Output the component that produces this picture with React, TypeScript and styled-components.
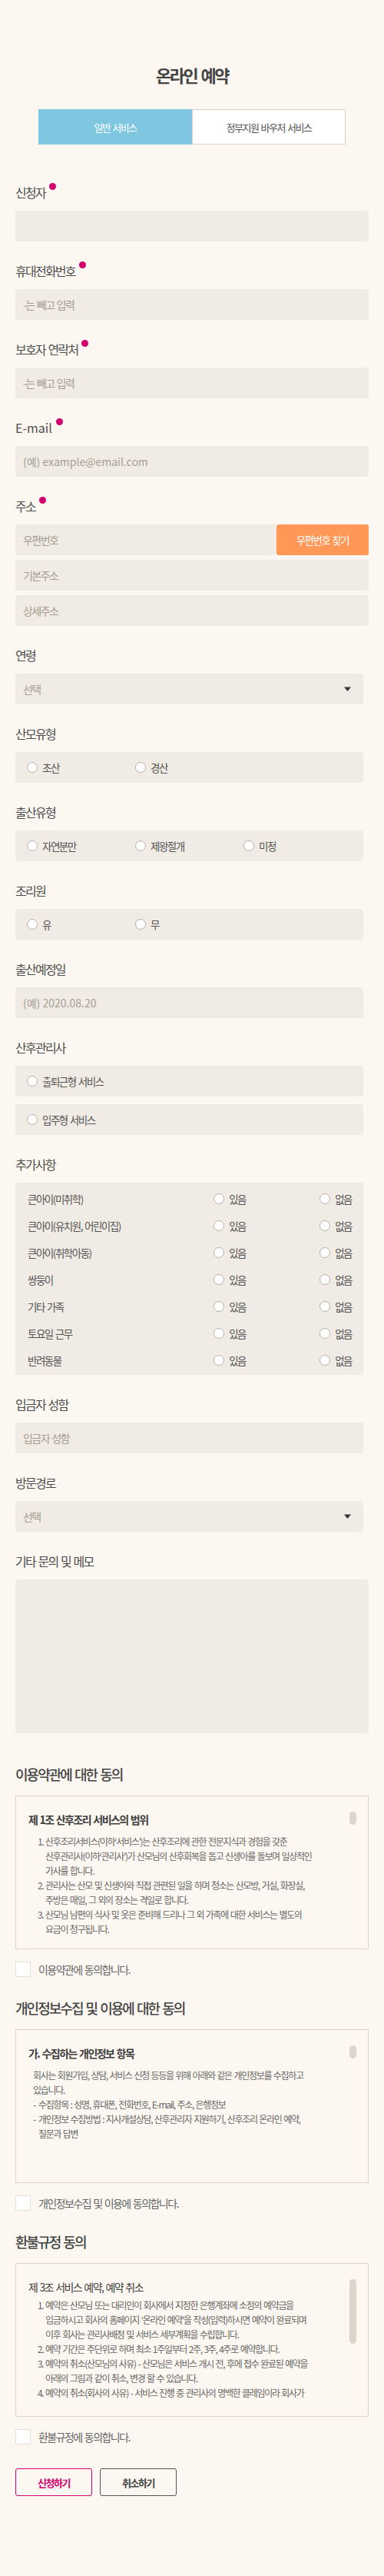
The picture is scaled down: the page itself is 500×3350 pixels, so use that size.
import React from "react";
import styled, { createGlobalStyle } from "styled-components";

const GlobalStyle = createGlobalStyle`
  html, body { margin: 0; padding: 0; background: #fcf8f1; }
  body { font-family: "Noto Sans CJK KR", "Noto Sans", sans-serif; color: #555; }
  *, *::before, *::after { box-sizing: border-box; letter-spacing: -0.11em; word-spacing: 0.11em; }
`;

const Page = styled.div`
  width: 500px;
  min-height: 3350px;
  padding: 81px 20px 100px;
  background: #fcf8f1;
  display: flex;
  flex-direction: column;
`;

const Title = styled.h1`
  margin: 0;
  font-size: 22px;
  line-height: 32px;
  font-weight: 700;
  color: #444;
  text-align: center;
`;

const Tabs = styled.div`
  display: flex;
  flex-shrink: 0;
  width: 400px;
  height: 46px;
  margin: 29px auto 0;
`;

const Tab = styled.button<{ $active?: boolean }>`
  flex: 1;
  padding: 0;
  border: 1px solid ${(p) => (p.$active ? "#7fc6e1" : "#dcd3c6")};
  background: ${(p) => (p.$active ? "#7fc6e1" : "#fff")};
  color: ${(p) => (p.$active ? "#fff" : "#555")};
  font-family: inherit;
  font-size: 13px;
  cursor: pointer;
`;

const Form = styled.form`
  display: flex;
  flex-direction: column;
  flex-shrink: 0;
  margin-top: 24px;
`;

const Field = styled.div`
  display: flex;
  flex-direction: column;
  flex-shrink: 0;
  margin-top: 28px;
`;

const Label = styled.div`
  display: flex;
  align-items: flex-start;
  height: 20px;
  margin-bottom: 14px;
`;

const LabelText = styled.span<{ $latin?: boolean }>`
  font-size: 16px;
  line-height: 20px;
  color: #4d4d4d;
  ${(p) => (p.$latin ? "letter-spacing: 0; word-spacing: 0;" : "")}
`;

const Required = styled.span`
  width: 9px;
  height: 9px;
  margin: -2px 0 0 5px;
  border-radius: 50%;
  background: #d2006c;
  flex-shrink: 0;
`;

const Input = styled.input<{ $narrow?: boolean; $latin?: boolean }>`
  width: ${(p) => (p.$narrow ? "calc(100% - 7px)" : "100%")};
  height: 40px;
  flex-shrink: 0;
  border: 0;
  border-radius: 3px;
  background: #f0ebe4;
  padding: 0 10px;
  font-family: inherit;
  font-size: 14px;
  color: #555;
  outline: none;
  ${(p) => (p.$latin ? "letter-spacing: 0; word-spacing: 0;" : "")}
  &::placeholder {
    color: #a59d93;
  }
`;

const ZipInput = styled(Input)`
  flex: 1;
  width: auto;
  min-width: 0;
  border-radius: 3px 0 0 3px;
`;

const AddressStack = styled.div`
  display: flex;
  flex-direction: column;
  gap: 6px;
`;

const ZipRow = styled.div`
  display: flex;
`;

const ZipButton = styled.button`
  width: 120px;
  height: 40px;
  flex-shrink: 0;
  border: 0;
  border-radius: 3px;
  background: #ff9757;
  color: #fff;
  font-family: inherit;
  font-size: 13.5px;
  cursor: pointer;
`;

const SelectBox = styled.div`
  display: flex;
  align-items: center;
  width: calc(100% - 7px);
  height: 40px;
  padding: 0 16px 0 10px;
  border-radius: 3px;
  background: #f0ebe4;
`;

const Select = styled.select`
  flex: 1;
  appearance: none;
  border: 0;
  padding: 0;
  background: transparent;
  font-family: inherit;
  font-size: 14px;
  color: #a59d93;
  outline: none;
`;

const ChoiceBox = styled.div`
  display: flex;
  align-items: center;
  width: calc(100% - 7px);
  height: 40px;
  padding: 0 15px;
  border-radius: 3px;
  background: #f0ebe4;
`;

const ChoiceStack = styled.div`
  display: flex;
  flex-direction: column;
  gap: 10px;
`;

const Choice = styled.label<{ $w?: number }>`
  display: flex;
  align-items: center;
  gap: 6px;
  width: ${(p) => (p.$w ? `${p.$w}px` : "auto")};
  font-size: 13.5px;
  color: #555;
`;

const Radio = styled.input`
  appearance: none;
  width: 14px;
  height: 14px;
  margin: 0;
  flex-shrink: 0;
  border: 1px solid #b7b1a9;
  border-radius: 50%;
  background: #fff;
`;

const ExtraBox = styled.div`
  width: calc(100% - 7px);
  padding: 3px 15px 2px 16px;
  border-radius: 3px;
  background: #f0ebe4;
`;

const ExtraRow = styled.div`
  display: grid;
  grid-template-columns: 1fr 138px auto;
  align-items: center;
  height: 35px;
`;

const ExtraName = styled.span`
  font-size: 13.5px;
  color: #555;
`;

const Memo = styled.textarea`
  display: block;
  width: 100%;
  height: 200px;
  flex-shrink: 0;
  border: 0;
  border-radius: 3px;
  background: #f0ebe4;
  resize: none;
  font-family: inherit;
  outline: none;
`;

const Agreement = styled.section<{ $first?: boolean }>`
  display: flex;
  flex-direction: column;
  flex-shrink: 0;
  margin-top: ${(p) => (p.$first ? "40px" : "27px")};
`;

const SectionTitle = styled.h2`
  margin: 0 0 15px;
  font-size: 18px;
  line-height: 26px;
  font-weight: 500;
  color: #444;
`;

const TermsBox = styled.div`
  display: flex;
  flex-shrink: 0;
  gap: 8px;
  height: 200px;
  padding: 20px 15px 17px 16px;
  border: 1px solid #ddd4c7;
`;

const TermsBody = styled.div`
  flex: 1;
  min-width: 0;
  overflow: hidden;
  font-size: 12px;
  line-height: 19px;
  color: #666;
  white-space: nowrap;
`;

const Track = styled.div`
  width: 9px;
  flex-shrink: 0;
`;

const Thumb = styled.div<{ $h: number }>`
  height: ${(p) => p.$h}px;
  border-radius: 5px;
  background: #dcd5cb;
`;

const TermsHeading = styled.h3<{ $plain?: boolean }>`
  margin: 0 0 ${(p) => (p.$plain ? "4px" : "9px")};
  font-size: 14px;
  line-height: 20px;
  font-weight: ${(p) => (p.$plain ? 400 : 700)};
  color: #3f3f3f;
`;

const TermsList = styled.ol`
  margin: 0;
  padding: 0 0 0 22px;
`;

const TermsPara = styled.div`
  padding-left: 6px;
`;

const DashLine = styled.div`
  display: flex;
`;

const Dash = styled.span`
  width: 7px;
  flex-shrink: 0;
`;

const Agree = styled.label`
  display: flex;
  align-items: center;
  gap: 10px;
  margin-top: 16px;
  font-size: 14px;
  color: #666;
`;

const CheckBox = styled.input`
  appearance: none;
  width: 20px;
  height: 20px;
  margin: 0;
  flex-shrink: 0;
  border: 1px solid #e3ded6;
  background: #fff;
`;

const Actions = styled.div`
  display: flex;
  flex-shrink: 0;
  gap: 10px;
  margin-top: 31px;
`;

const ActionButton = styled.button<{ $primary?: boolean }>`
  width: 100px;
  height: 36px;
  border-radius: 3px;
  border: 1px solid ${(p) => (p.$primary ? "#d3006e" : "#555")};
  background: transparent;
  color: ${(p) => (p.$primary ? "#d3006e" : "#444")};
  font-family: inherit;
  font-size: 13px;
  font-weight: 700;
  cursor: pointer;
`;

const Arrow = () => (
  <svg width="9" height="6" viewBox="0 0 9 6" aria-hidden="true">
    <path d="M0 0.5h9L4.5 6z" fill="#333" />
  </svg>
);

const FieldLabel = ({ text, required, latin }: { text: string; required?: boolean; latin?: boolean }) => (
  <Label>
    <LabelText $latin={latin}>{text}</LabelText>
    {required && <Required />}
  </Label>
);

const SelectField = ({ name }: { name: string }) => (
  <SelectBox>
    <Select name={name} defaultValue="">
      <option value="">선택</option>
    </Select>
    <Arrow />
  </SelectBox>
);

const RadioRow = ({ name, options }: { name: string; options: string[] }) => (
  <ChoiceBox>
    {options.map((o) => (
      <Choice key={o} $w={141}>
        <Radio type="radio" name={name} />
        {o}
      </Choice>
    ))}
  </ChoiceBox>
);

const contactFields = [
  { label: "신청자", placeholder: "" },
  { label: "휴대전화번호", placeholder: "-는 빼고 입력" },
  { label: "보호자 연락처", placeholder: "-는 빼고 입력" },
];

const extras = [
  "큰아이(미취학)",
  "큰아이(유치원, 어린이집)",
  "큰아이(취학아동)",
  "쌍둥이",
  "기타 가족",
  "토요일 근무",
  "반려동물",
];

export default function App() {
  return (
    <>
      <GlobalStyle />
      <Page>
        <Title>온라인 예약</Title>
        <Tabs>
          <Tab type="button" $active>
            일반 서비스
          </Tab>
          <Tab type="button">정부지원 바우처 서비스</Tab>
        </Tabs>

        <Form onSubmit={(e) => e.preventDefault()}>
          {contactFields.map((f) => (
            <Field key={f.label}>
              <FieldLabel text={f.label} required />
              <Input placeholder={f.placeholder} />
            </Field>
          ))}

          <Field>
            <FieldLabel text="E-mail" required latin />
            <Input $latin placeholder="(예) example@email.com" />
          </Field>

          <Field>
            <FieldLabel text="주소" required />
            <AddressStack>
              <ZipRow>
                <ZipInput placeholder="우편번호" />
                <ZipButton type="button">우편번호 찾기</ZipButton>
              </ZipRow>
              <Input placeholder="기본주소" />
              <Input placeholder="상세주소" />
            </AddressStack>
          </Field>

          <Field>
            <FieldLabel text="연령" />
            <SelectField name="age" />
          </Field>

          <Field>
            <FieldLabel text="산모유형" />
            <RadioRow name="mother" options={["초산", "경산"]} />
          </Field>

          <Field>
            <FieldLabel text="출산유형" />
            <RadioRow name="birth" options={["자연분만", "제왕절개", "미정"]} />
          </Field>

          <Field>
            <FieldLabel text="조리원" />
            <RadioRow name="center" options={["유", "무"]} />
          </Field>

          <Field>
            <FieldLabel text="출산예정일" />
            <Input $narrow $latin placeholder="(예) 2020.08.20" />
          </Field>

          <Field>
            <FieldLabel text="산후관리사" />
            <ChoiceStack>
              <ChoiceBox>
                <Choice>
                  <Radio type="radio" name="care" />
                  출퇴근형 서비스
                </Choice>
              </ChoiceBox>
              <ChoiceBox>
                <Choice>
                  <Radio type="radio" name="care" />
                  입주형 서비스
                </Choice>
              </ChoiceBox>
            </ChoiceStack>
          </Field>

          <Field>
            <FieldLabel text="추가사항" />
            <ExtraBox>
              {extras.map((x, i) => (
                <ExtraRow key={x}>
                  <ExtraName>{x}</ExtraName>
                  <Choice>
                    <Radio type="radio" name={`extra${i}`} />
                    있음
                  </Choice>
                  <Choice>
                    <Radio type="radio" name={`extra${i}`} />
                    없음
                  </Choice>
                </ExtraRow>
              ))}
            </ExtraBox>
          </Field>

          <Field>
            <FieldLabel text="입금자 성함" />
            <Input $narrow placeholder="입금자 성함" />
          </Field>

          <Field>
            <FieldLabel text="방문경로" />
            <SelectField name="route" />
          </Field>

          <Field>
            <FieldLabel text="기타 문의 및 메모" />
            <Memo />
          </Field>

          <Agreement $first>
            <SectionTitle>이용약관에 대한 동의</SectionTitle>
            <TermsBox>
              <TermsBody>
                <TermsHeading>제 1조 산후조리 서비스의 범위</TermsHeading>
                <TermsList>
                  <li>
                    산후조리서비스(이하‘서비스’)는 산후조리에 관한 전문지식과 경험을 갖춘
                    <br />
                    산후관리사(이하‘관리사’)가 산모님의 산후회복을 돕고 신생아를 돌보며 일상적인
                    <br />
                    가사를 합니다.
                  </li>
                  <li>
                    관리사는 산모 및 신생아와 직접 관련된 일을 하며 청소는 산모방, 거실, 화장실,
                    <br />
                    주방은 매일, 그 외의 장소는 격일로 합니다.
                  </li>
                  <li>
                    산모님 남편의 식사 및 옷은 준비해 드리나 그 외 가족에 대한 서비스는 별도의
                    <br />
                    요금이 청구됩니다.
                  </li>
                </TermsList>
              </TermsBody>
              <Track>
                <Thumb $h={17} />
              </Track>
            </TermsBox>
            <Agree>
              <CheckBox type="checkbox" />
              이용약관에 동의합니다.
            </Agree>
          </Agreement>

          <Agreement>
            <SectionTitle>개인정보수집 및 이용에 대한 동의</SectionTitle>
            <TermsBox>
              <TermsBody>
                <TermsHeading>가. 수집하는 개인정보 항목</TermsHeading>
                <TermsPara>
                  회사는 회원가입, 상담, 서비스 신청 등등을 위해 아래와 같은 개인정보를 수집하고
                  <br />
                  있습니다.
                  <DashLine>
                    <Dash>-</Dash>
                    <span>수집항목 : 성명, 휴대폰, 전화번호, E-mail, 주소, 은행정보</span>
                  </DashLine>
                  <DashLine>
                    <Dash>-</Dash>
                    <span>
                      개인정보 수집방법 : 지사개설상담, 산후관리자 지원하기, 산후조리 온라인 예약,
                      <br />
                      질문과 답변
                    </span>
                  </DashLine>
                </TermsPara>
              </TermsBody>
              <Track>
                <Thumb $h={17} />
              </Track>
            </TermsBox>
            <Agree>
              <CheckBox type="checkbox" />
              개인정보수집 및 이용에 동의합니다.
            </Agree>
          </Agreement>

          <Agreement>
            <SectionTitle>환불규정 동의</SectionTitle>
            <TermsBox>
              <TermsBody>
                <TermsHeading $plain>제 3조 서비스 예약, 예약 취소</TermsHeading>
                <TermsList>
                  <li>
                    예약은 산모님 또는 대리인이 회사에서 지정한 은행계좌에 소정의 예약금을
                    <br />
                    입금하시고 회사의 홈페이지 ‘온라인 예약’을 작성(입력)하시면 예약이 완료되며
                    <br />
                    이후 회사는 관리사배정 및 서비스 세부계획을 수립합니다.
                  </li>
                  <li>예약 기간은 주단위로 하며 최소 1주일부터 2주, 3주, 4주로 예약합니다.</li>
                  <li>
                    예약의 취소(산모님의 사유) - 산모님은 서비스 개시 전, 후에 접수 완료된 예약을
                    <br />
                    아래의 그림과 같이 취소, 변경 할 수 있습니다.
                  </li>
                  <li>예약의 취소(회사의 사유) - 서비스 진행 중 관리사의 명백한 클레임이라 회사가</li>
                </TermsList>
              </TermsBody>
              <Track>
                <Thumb $h={84} />
              </Track>
            </TermsBox>
            <Agree>
              <CheckBox type="checkbox" />
              환불규정에 동의합니다.
            </Agree>
          </Agreement>

          <Actions>
            <ActionButton type="submit" $primary>
              신청하기
            </ActionButton>
            <ActionButton type="button">취소하기</ActionButton>
          </Actions>
        </Form>
      </Page>
    </>
  );
}
